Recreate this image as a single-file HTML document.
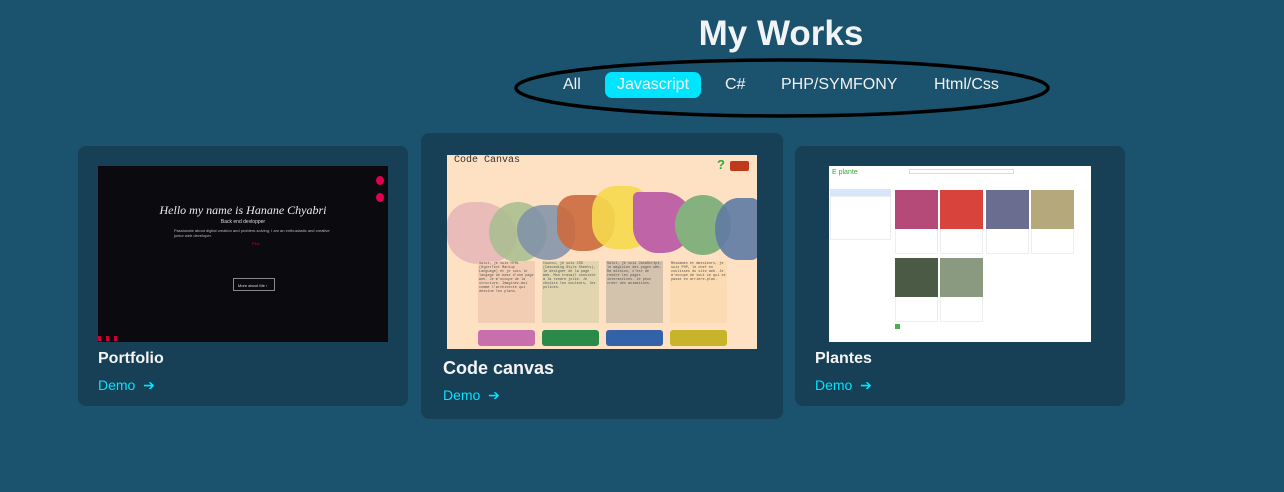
<!DOCTYPE html>
<html><head><meta charset="utf-8"><style>
*{margin:0;padding:0;box-sizing:border-box}
body{width:1284px;height:492px;background:#1b526d;font-family:"Liberation Sans",sans-serif;position:relative;overflow:hidden;color:#f1f1f1}
.abs{position:absolute}
h1{position:absolute;left:0;width:1562px;text-align:center;top:14px;font-size:35px;font-weight:bold;color:#f1f3f5}
.tab{position:absolute;top:76px;font-size:16px;color:#f1f1f1}
.card{position:absolute;background:#173f55;border-radius:8px}
.t{position:absolute;font-weight:bold;color:#f4f4f4}
.demo{position:absolute;color:#00e5ff;font-size:14px}
.pc{position:absolute;width:43px;height:64px;border:1px solid #eee}
.mono{font-family:"Liberation Mono",monospace;font-size:3.5px;color:#555;line-height:4px;padding:1px;overflow:hidden}
</style></head><body>
<h1>My Works</h1>
<svg class="abs" style="left:512px;top:55px" width="542" height="66"><ellipse cx="270" cy="33" rx="266" ry="28" fill="none" stroke="#000" stroke-width="3.5"/></svg>
<div class="tab" style="left:563px">All</div>
<div class="abs" style="left:605px;top:72px;width:96px;height:26px;background:#00e5ff;border-radius:7px"></div>
<div class="tab" style="left:617px">Javascript</div>
<div class="tab" style="left:725px">C#</div>
<div class="tab" style="left:781px">PHP/SYMFONY</div>
<div class="tab" style="left:934px">Html/Css</div>

<div class="card" style="left:78px;top:146px;width:330px;height:260px"></div>
<div class="abs" style="left:98px;top:166px;width:290px;height:176px;background:#0b0a0f">
 <div class="abs" style="left:0;width:290px;top:37px;text-align:center;font-family:'Liberation Serif',serif;font-style:italic;font-size:12px;color:#eee">Hello my name is Hanane Chyabri</div>
 <div class="abs" style="left:0;width:290px;top:53px;text-align:center;font-size:5px;color:#ddd">Back end devlopper</div>
 <div class="abs" style="left:76px;top:62px;width:165px;font-size:4px;color:#bbb">Passionate about digital creation and problem-solving, I am an enthusiastic and creative junior web developer.</div>
 <div class="abs" style="left:154px;top:75px;font-size:4px;color:#c03">Plus</div>
 <div class="abs" style="left:135px;top:112px;width:42px;height:13px;border:1px solid #888;font-size:4px;color:#ddd;padding:4px 4px">More about Me ›</div>
 <div class="abs" style="left:278px;top:10px;width:8px;height:9px;border-radius:50%;background:#e0004d"></div>
 <div class="abs" style="left:278px;top:27px;width:8px;height:9px;border-radius:50%;background:#e0004d"></div>
 <div class="abs" style="left:0;top:170px;width:24px;height:5px;background:linear-gradient(90deg,#c03 3px,transparent 3px 8px,#c03 8px 11px,transparent 11px 16px,#c03 16px 19px,transparent 19px)"></div>
</div>
<div class="t" style="left:98px;top:350px;font-size:16px">Portfolio</div>
<div class="demo" style="left:98px;top:377px">Demo &nbsp;➔</div>

<div class="card" style="left:421px;top:133px;width:362px;height:286px"></div>
<div class="abs" style="left:447px;top:155px;width:310px;height:194px;background:#fee0c3;overflow:hidden">
 <div class="abs" style="left:7px;top:0;font-family:'Liberation Mono',monospace;font-size:10px;color:#333">Code Canvas</div>
 <div class="abs" style="left:270px;top:2px;font-size:13px;font-weight:bold;color:#3a3">?</div>
 <div class="abs" style="left:283px;top:6px;width:19px;height:10px;background:#c0391b;border-radius:2px"></div>
 <div class="abs" style="left:0;top:47px;width:70px;height:62px;background:#e8b8b8;border-radius:40% 60% 50% 50%;opacity:.9"></div>
 <div class="abs" style="left:42px;top:47px;width:58px;height:60px;background:#a7bd8e;border-radius:50%;opacity:.85"></div>
 <div class="abs" style="left:70px;top:50px;width:58px;height:55px;background:#7e8fa8;border-radius:50% 40% 50% 60%;opacity:.85"></div>
 <div class="abs" style="left:110px;top:40px;width:58px;height:56px;background:#cc6a3e;border-radius:30% 40% 50% 40%;opacity:.9"></div>
 <div class="abs" style="left:145px;top:31px;width:60px;height:63px;background:#f5d94c;border-radius:40%;opacity:.9"></div>
 <div class="abs" style="left:186px;top:37px;width:60px;height:61px;background:#bf65a7;border-radius:10% 60% 60% 50%"></div>
 <div class="abs" style="left:228px;top:40px;width:56px;height:60px;background:#84b17d;border-radius:50%"></div>
 <div class="abs" style="left:268px;top:43px;width:46px;height:62px;background:#5f7ba5;border-radius:50% 20% 20% 50%;opacity:.9"></div>
 <div class="abs mono" style="left:31px;top:106px;width:57px;height:62px;background:#f3cdb3">Salut, je suis HTML (HyperText Markup Language) et je suis le langage de base d'une page web. Je m'occupe de la structure. Imaginez-moi comme l'architecte qui dessine les plans.</div>
 <div class="abs mono" style="left:95px;top:106px;width:57px;height:62px;background:#e0d5ae">Coucou, je suis CSS (Cascading Style Sheets), le designer de la page web. Mon travail consiste a la rendre jolie. Je choisis les couleurs, les polices.</div>
 <div class="abs mono" style="left:159px;top:106px;width:57px;height:62px;background:#d3c2ac">Salut, je suis JavaScript, le magicien des pages web. Ma mission, c'est de rendre les pages interactives. Je peux creer des animations.</div>
 <div class="abs mono" style="left:223px;top:106px;width:57px;height:62px;background:#fbdbb1">Mesdames et messieurs, je suis PHP, le chef en coulisses du site web. Je m'occupe de tout ce qui se passe en arriere-plan.</div>
 <div class="abs" style="left:31px;top:175px;width:57px;height:16px;background:#c870ad;border-radius:3px"></div>
 <div class="abs" style="left:95px;top:175px;width:57px;height:16px;background:#2a8a4a;border-radius:3px"></div>
 <div class="abs" style="left:159px;top:175px;width:57px;height:16px;background:#3462a8;border-radius:3px"></div>
 <div class="abs" style="left:223px;top:175px;width:57px;height:16px;background:#c8b42b;border-radius:3px"></div>
</div>
<div class="t" style="left:443px;top:358px;font-size:18px">Code canvas</div>
<div class="demo" style="left:443px;top:387px">Demo &nbsp;➔</div>

<div class="card" style="left:795px;top:146px;width:330px;height:260px"></div>
<div class="abs" style="left:829px;top:166px;width:262px;height:176px;background:#fff">
 <div class="abs" style="left:3px;top:3px;font-size:7px;color:#3a3">E plante</div>
 <div class="abs" style="left:80px;top:3px;width:105px;height:5px;border:1px solid #ddd"></div>
 <div class="abs" style="left:1px;top:23px;width:61px;height:7px;background:#d7e6fb"></div>
 <div class="abs" style="left:1px;top:30px;width:61px;height:44px;border:1px solid #eee"></div>
 <div class="pc" style="left:66px;top:24px"></div><div class="pc" style="left:111px;top:24px"></div>
 <div class="pc" style="left:157px;top:24px"></div><div class="pc" style="left:202px;top:24px"></div>
 <div class="pc" style="left:66px;top:92px"></div><div class="pc" style="left:111px;top:92px"></div>
 <div class="abs" style="left:66px;top:24px;width:43px;height:39px;background:#b54a79"></div>
 <div class="abs" style="left:111px;top:24px;width:43px;height:39px;background:#d8443c"></div>
 <div class="abs" style="left:157px;top:24px;width:43px;height:39px;background:#6a6d8f"></div>
 <div class="abs" style="left:202px;top:24px;width:43px;height:39px;background:#b5a87a"></div>
 <div class="abs" style="left:66px;top:92px;width:43px;height:39px;background:#4a5a45"></div>
 <div class="abs" style="left:111px;top:92px;width:43px;height:39px;background:#8a9a80"></div>
 <div class="abs" style="left:66px;top:158px;width:5px;height:5px;background:#4caf50"></div>
</div>
<div class="t" style="left:815px;top:350px;font-size:16px">Plantes</div>
<div class="demo" style="left:815px;top:377px">Demo &nbsp;➔</div>
</body></html>
